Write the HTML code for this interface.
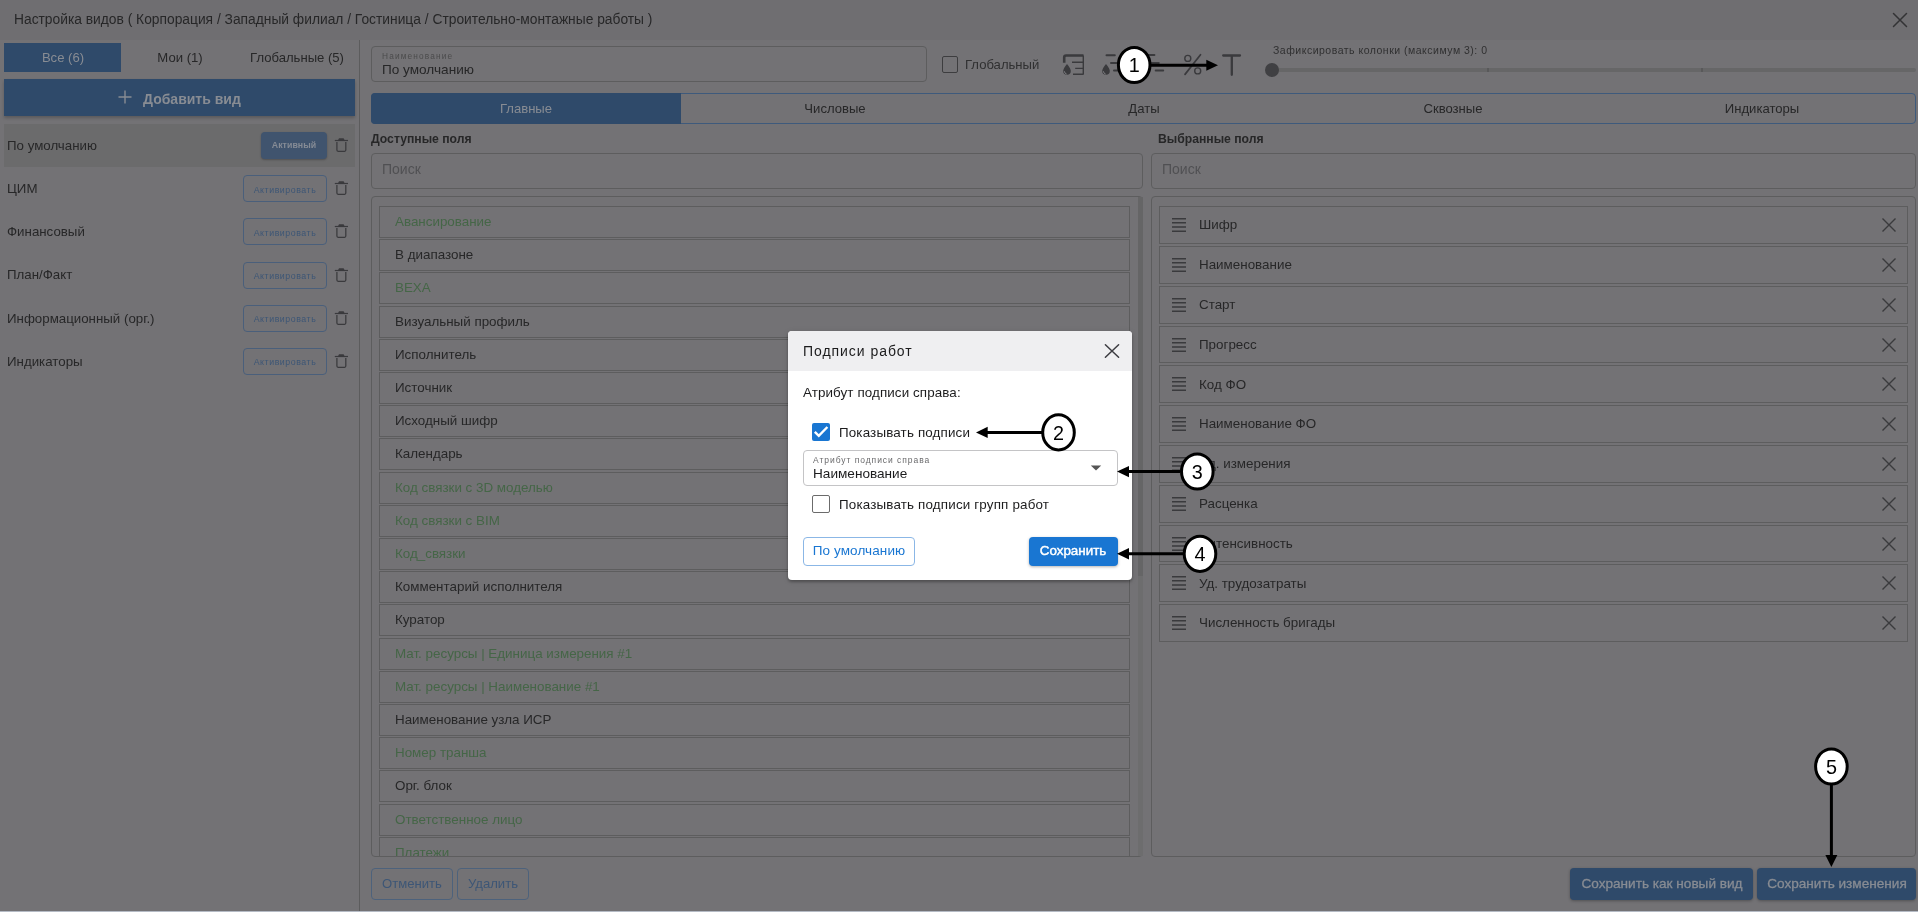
<!DOCTYPE html>
<html><head><meta charset="utf-8">
<style>
*{box-sizing:border-box;margin:0;padding:0}
html,body{width:1918px;height:912px;overflow:hidden}
body{position:relative;background:#737275;font-family:"Liberation Sans",sans-serif;color:#272728;font-size:13px}
.a{position:absolute}
.t{position:absolute;white-space:nowrap;line-height:1;will-change:transform}
</style></head><body>
<div class="a" style="left:0px;top:0px;width:1918px;height:40px;background:#6f6e71"></div>
<div class="t" style="left:14px;top:12.52px;font-size:13.8px;color:#272728;">Настройка видов ( Корпорация / Западный филиал / Гостиница / Строительно-монтажные работы )</div>
<svg class="a" style="left:1892px;top:12px" width="16" height="16" viewBox="0 0 16 16"><path d="M1.5 1.5L14.5 14.5M14.5 1.5L1.5 14.5" stroke="#333335" stroke-width="1.5" stroke-linecap="round"/></svg>
<div class="a" style="left:359px;top:40px;width:1px;height:871px;background:#5c5c5d"></div>
<div class="a" style="left:4px;top:43px;width:117px;height:29px;background:#2f4a6a"></div>
<div class="t" style="left:-237.5px;width:600px;text-align:center;top:50.91px;font-size:13.1px;color:#888c93;">Все (6)</div>
<div class="t" style="left:-120.5px;width:600px;text-align:center;top:50.91px;font-size:13.1px;color:#272728;">Мои (1)</div>
<div class="t" style="left:-3.5px;width:600px;text-align:center;top:50.91px;font-size:13.1px;color:#272728;">Глобальные (5)</div>
<div class="a" style="left:4px;top:79px;width:351px;height:37px;background:#2f4a6a;box-shadow:0 2px 3px rgba(0,0,0,.22)"></div>
<svg class="a" style="left:118px;top:90px" width="14" height="14"><path d="M7 0.5V13.5M0.5 7H13.5" stroke="#888c93" stroke-width="1.4"/></svg>
<div class="t" style="left:142.5px;top:91.75px;font-size:14px;color:#888c93;font-weight:700;letter-spacing:0px;">Добавить вид</div>
<div class="a" style="left:4px;top:124px;width:351px;height:43px;background:#6b6b6c"></div>
<div class="a" style="left:261px;top:132px;width:66px;height:27px;background:#40546e;border-radius:4px;box-shadow:0 1px 2px rgba(0,0,0,.25)"></div>
<div class="t" style="left:-6px;width:600px;text-align:center;top:140.95px;font-size:8.8px;color:#858b95;font-weight:700;letter-spacing:0.05px;">Активный</div>
<div class="t" style="left:7px;top:139.04px;font-size:13.3px;color:#272728;">По умолчанию</div>
<svg class="a" style="left:334px;top:137.0px" width="15" height="16" viewBox="0 0 15 16"><path d="M0.8 3.5H14" stroke="#3a3a3d" stroke-width="1.2"/><path d="M4 3.2L5 1.2H9.6L10.6 3.2Z" fill="#3a3a3d"/><path d="M2.9 5V13.1Q2.9 14.3 4.1 14.3H10.6Q11.8 14.3 11.8 13.1V5" stroke="#3a3a3d" stroke-width="1.25" fill="none"/></svg>
<div class="a" style="left:243px;top:175.2px;width:84px;height:27px;border:1px solid #4a5f7b;border-radius:4px"></div>
<div class="t" style="left:-15px;width:600px;text-align:center;top:185.60px;font-size:8.8px;color:#3d5676;letter-spacing:0.55px;">Активировать</div>
<div class="t" style="left:7px;top:182.19px;font-size:13.3px;color:#272728;">ЦИМ</div>
<svg class="a" style="left:334px;top:180.2px" width="15" height="16" viewBox="0 0 15 16"><path d="M0.8 3.5H14" stroke="#3a3a3d" stroke-width="1.2"/><path d="M4 3.2L5 1.2H9.6L10.6 3.2Z" fill="#3a3a3d"/><path d="M2.9 5V13.1Q2.9 14.3 4.1 14.3H10.6Q11.8 14.3 11.8 13.1V5" stroke="#3a3a3d" stroke-width="1.25" fill="none"/></svg>
<div class="a" style="left:243px;top:218.4px;width:84px;height:27px;border:1px solid #4a5f7b;border-radius:4px"></div>
<div class="t" style="left:-15px;width:600px;text-align:center;top:228.75px;font-size:8.8px;color:#3d5676;letter-spacing:0.55px;">Активировать</div>
<div class="t" style="left:7px;top:225.34px;font-size:13.3px;color:#272728;">Финансовый</div>
<svg class="a" style="left:334px;top:223.3px" width="15" height="16" viewBox="0 0 15 16"><path d="M0.8 3.5H14" stroke="#3a3a3d" stroke-width="1.2"/><path d="M4 3.2L5 1.2H9.6L10.6 3.2Z" fill="#3a3a3d"/><path d="M2.9 5V13.1Q2.9 14.3 4.1 14.3H10.6Q11.8 14.3 11.8 13.1V5" stroke="#3a3a3d" stroke-width="1.25" fill="none"/></svg>
<div class="a" style="left:243px;top:261.6px;width:84px;height:27px;border:1px solid #4a5f7b;border-radius:4px"></div>
<div class="t" style="left:-15px;width:600px;text-align:center;top:271.90px;font-size:8.8px;color:#3d5676;letter-spacing:0.55px;">Активировать</div>
<div class="t" style="left:7px;top:268.49px;font-size:13.3px;color:#272728;">План/Факт</div>
<svg class="a" style="left:334px;top:266.5px" width="15" height="16" viewBox="0 0 15 16"><path d="M0.8 3.5H14" stroke="#3a3a3d" stroke-width="1.2"/><path d="M4 3.2L5 1.2H9.6L10.6 3.2Z" fill="#3a3a3d"/><path d="M2.9 5V13.1Q2.9 14.3 4.1 14.3H10.6Q11.8 14.3 11.8 13.1V5" stroke="#3a3a3d" stroke-width="1.25" fill="none"/></svg>
<div class="a" style="left:243px;top:304.7px;width:84px;height:27px;border:1px solid #4a5f7b;border-radius:4px"></div>
<div class="t" style="left:-15px;width:600px;text-align:center;top:315.05px;font-size:8.8px;color:#3d5676;letter-spacing:0.55px;">Активировать</div>
<div class="t" style="left:7px;top:311.64px;font-size:13.3px;color:#272728;">Информационный (орг.)</div>
<svg class="a" style="left:334px;top:309.6px" width="15" height="16" viewBox="0 0 15 16"><path d="M0.8 3.5H14" stroke="#3a3a3d" stroke-width="1.2"/><path d="M4 3.2L5 1.2H9.6L10.6 3.2Z" fill="#3a3a3d"/><path d="M2.9 5V13.1Q2.9 14.3 4.1 14.3H10.6Q11.8 14.3 11.8 13.1V5" stroke="#3a3a3d" stroke-width="1.25" fill="none"/></svg>
<div class="a" style="left:243px;top:347.8px;width:84px;height:27px;border:1px solid #4a5f7b;border-radius:4px"></div>
<div class="t" style="left:-15px;width:600px;text-align:center;top:358.20px;font-size:8.8px;color:#3d5676;letter-spacing:0.55px;">Активировать</div>
<div class="t" style="left:7px;top:354.79px;font-size:13.3px;color:#272728;">Индикаторы</div>
<svg class="a" style="left:334px;top:352.8px" width="15" height="16" viewBox="0 0 15 16"><path d="M0.8 3.5H14" stroke="#3a3a3d" stroke-width="1.2"/><path d="M4 3.2L5 1.2H9.6L10.6 3.2Z" fill="#3a3a3d"/><path d="M2.9 5V13.1Q2.9 14.3 4.1 14.3H10.6Q11.8 14.3 11.8 13.1V5" stroke="#3a3a3d" stroke-width="1.25" fill="none"/></svg>
<div class="a" style="left:371px;top:46px;width:556px;height:36px;border:1px solid #5d5d5e;border-radius:4px"></div>
<div class="t" style="left:382px;top:52.17px;font-size:8.3px;color:#4b4b4c;letter-spacing:1.15px;">Наименование</div>
<div class="t" style="left:382px;top:63.49px;font-size:13.6px;color:#272728;">По умолчанию</div>
<div class="a" style="left:942px;top:56.3px;width:16px;height:16.4px;border:1.3px solid #3d3d3f;border-radius:2px"></div>
<div class="t" style="left:964.6px;top:57.71px;font-size:13.1px;color:#303031;">Глобальный</div>
<svg class="a" style="left:1060px;top:50px" width="190" height="30" viewBox="1060 50 190 30">
<g fill="none" stroke="#3a3a3d">
<path d="M1064.2 62.7V57.4Q1064.2 55.5 1066.1 55.5H1083.5" stroke-width="2.6" />
<path d="M1083.3 55.4V74.3" stroke-width="1.4"/>
<path d="M1072 62.3H1083.6M1075.2 68.4H1083.6M1073 74.3H1083.6" stroke-width="1.4"/>
<path d="M1106.5 55.3H1114.8M1111 62.9H1123M1114 70.4H1123" stroke-width="2" stroke-linecap="round"/>
<path d="M1142 55H1154.4M1147 62.9H1158.8M1155.7 70.5H1163.2" stroke-width="2" stroke-linecap="round"/>
<circle cx="1187.8" cy="58.4" r="3" stroke-width="1.4"/>
<circle cx="1197.7" cy="70.9" r="3" stroke-width="1.4"/>
<path d="M1185 74.4L1200.5 54.7" stroke-width="1.7" stroke-linecap="round"/>
<path d="M1223.2 55.5H1240M1231.8 55.5V74.8" stroke-width="2.3" stroke-linecap="round"/>
</g>
<path d="M1067 64Q1063.2 68.6 1063.2 71Q1063.2 74.8 1067 74.8Q1070.8 74.8 1070.8 71Q1070.8 68.6 1067 64Z" fill="#3a3a3d"/>
<path d="M1106 64Q1102.2 68.6 1102.2 71Q1102.2 74.8 1106 74.8Q1109.8 74.8 1109.8 71Q1109.8 68.6 1106 64Z" fill="#3a3a3d"/>
<path d="M1064.3 71.2Q1064.5 73.5 1066.7 74.1M1103.3 71.2Q1103.5 73.5 1105.7 74.1" stroke="#8c8c90" stroke-width="0.8" fill="none"/>
</svg>
<div class="t" style="left:1272.7px;top:45.11px;font-size:10.5px;color:#303031;letter-spacing:0.5px;">Зафиксировать колонки (максимум 3): 0</div>
<div class="a" style="left:1272px;top:68px;width:644px;height:4px;background:#666667;border-radius:2px"></div>
<div class="a" style="left:1486.5px;top:68px;width:2px;height:4px;background:#59595a"></div>
<div class="a" style="left:1701px;top:68px;width:2px;height:4px;background:#59595a"></div>
<div class="a" style="left:1265px;top:63px;width:14px;height:14px;border-radius:50%;background:#404043"></div>
<div class="a" style="left:371px;top:93px;width:1545px;height:31px;border:1px solid #3e5a7c;border-radius:4px;overflow:hidden"></div>
<div class="a" style="left:371px;top:93px;width:310px;height:31px;background:#2f4a6a;border-radius:4px 0 0 4px"></div>
<div class="t" style="left:225.5px;width:600px;text-align:center;top:101.81px;font-size:13.1px;color:#888c93;">Главные</div>
<div class="t" style="left:534.5px;width:600px;text-align:center;top:101.81px;font-size:13.1px;color:#272728;">Числовые</div>
<div class="t" style="left:843.5px;width:600px;text-align:center;top:101.81px;font-size:13.1px;color:#272728;">Даты</div>
<div class="t" style="left:1152.5px;width:600px;text-align:center;top:101.81px;font-size:13.1px;color:#272728;">Сквозные</div>
<div class="t" style="left:1461.5px;width:600px;text-align:center;top:101.81px;font-size:13.1px;color:#272728;">Индикаторы</div>
<div class="t" style="left:371px;top:133.27px;font-size:12.2px;color:#272728;font-weight:700;">Доступные поля</div>
<div class="t" style="left:1158.4px;top:133.27px;font-size:12.2px;color:#272728;font-weight:700;">Выбранные поля</div>
<div class="a" style="left:371px;top:153px;width:772px;height:35.5px;border:1px solid #5d5d5e;border-radius:4px"></div>
<div class="t" style="left:382px;top:162.45px;font-size:14px;color:#505053;">Поиск</div>
<div class="a" style="left:1151px;top:153px;width:765px;height:35.5px;border:1px solid #5d5d5e;border-radius:4px"></div>
<div class="t" style="left:1162px;top:162.45px;font-size:14px;color:#505053;">Поиск</div>
<div class="a" style="left:371px;top:196px;width:772px;height:661px;border:1px solid #5d5d5e;border-radius:4px"></div>
<div class="a" style="left:1138px;top:197px;width:5px;height:659px;background:#6d6d6e"></div>
<div class="a" style="left:1138px;top:197px;width:5px;height:379px;background:#656566"></div>
<div class="a" style="left:372px;top:197px;width:766px;height:659px;overflow:hidden">
<div class="a" style="left:7px;top:9.0px;width:751px;height:32px;border:1px solid #5d5d5e"></div>
<div class="t" style="left:22.5px;top:18.06px;font-size:13.4px;color:#456647">Авансирование</div>
<div class="a" style="left:7px;top:42.2px;width:751px;height:32px;border:1px solid #5d5d5e"></div>
<div class="t" style="left:22.5px;top:51.26px;font-size:13.4px;color:#272728">В диапазоне</div>
<div class="a" style="left:7px;top:75.4px;width:751px;height:32px;border:1px solid #5d5d5e"></div>
<div class="t" style="left:22.5px;top:84.46px;font-size:13.4px;color:#456647">ВЕХА</div>
<div class="a" style="left:7px;top:108.6px;width:751px;height:32px;border:1px solid #5d5d5e"></div>
<div class="t" style="left:22.5px;top:117.66px;font-size:13.4px;color:#272728">Визуальный профиль</div>
<div class="a" style="left:7px;top:141.8px;width:751px;height:32px;border:1px solid #5d5d5e"></div>
<div class="t" style="left:22.5px;top:150.86px;font-size:13.4px;color:#272728">Исполнитель</div>
<div class="a" style="left:7px;top:175.0px;width:751px;height:32px;border:1px solid #5d5d5e"></div>
<div class="t" style="left:22.5px;top:184.06px;font-size:13.4px;color:#272728">Источник</div>
<div class="a" style="left:7px;top:208.2px;width:751px;height:32px;border:1px solid #5d5d5e"></div>
<div class="t" style="left:22.5px;top:217.26px;font-size:13.4px;color:#272728">Исходный шифр</div>
<div class="a" style="left:7px;top:241.4px;width:751px;height:32px;border:1px solid #5d5d5e"></div>
<div class="t" style="left:22.5px;top:250.46px;font-size:13.4px;color:#272728">Календарь</div>
<div class="a" style="left:7px;top:274.6px;width:751px;height:32px;border:1px solid #5d5d5e"></div>
<div class="t" style="left:22.5px;top:283.66px;font-size:13.4px;color:#456647">Код связки с 3D моделью</div>
<div class="a" style="left:7px;top:307.8px;width:751px;height:32px;border:1px solid #5d5d5e"></div>
<div class="t" style="left:22.5px;top:316.86px;font-size:13.4px;color:#456647">Код связки с BIM</div>
<div class="a" style="left:7px;top:341.0px;width:751px;height:32px;border:1px solid #5d5d5e"></div>
<div class="t" style="left:22.5px;top:350.06px;font-size:13.4px;color:#456647">Код_связки</div>
<div class="a" style="left:7px;top:374.2px;width:751px;height:32px;border:1px solid #5d5d5e"></div>
<div class="t" style="left:22.5px;top:383.26px;font-size:13.4px;color:#272728">Комментарий исполнителя</div>
<div class="a" style="left:7px;top:407.4px;width:751px;height:32px;border:1px solid #5d5d5e"></div>
<div class="t" style="left:22.5px;top:416.46px;font-size:13.4px;color:#272728">Куратор</div>
<div class="a" style="left:7px;top:440.6px;width:751px;height:32px;border:1px solid #5d5d5e"></div>
<div class="t" style="left:22.5px;top:449.66px;font-size:13.4px;color:#456647">Мат. ресурсы | Единица измерения #1</div>
<div class="a" style="left:7px;top:473.8px;width:751px;height:32px;border:1px solid #5d5d5e"></div>
<div class="t" style="left:22.5px;top:482.86px;font-size:13.4px;color:#456647">Мат. ресурсы | Наименование #1</div>
<div class="a" style="left:7px;top:507.0px;width:751px;height:32px;border:1px solid #5d5d5e"></div>
<div class="t" style="left:22.5px;top:516.06px;font-size:13.4px;color:#272728">Наименование узла ИСР</div>
<div class="a" style="left:7px;top:540.2px;width:751px;height:32px;border:1px solid #5d5d5e"></div>
<div class="t" style="left:22.5px;top:549.26px;font-size:13.4px;color:#456647">Номер транша</div>
<div class="a" style="left:7px;top:573.4px;width:751px;height:32px;border:1px solid #5d5d5e"></div>
<div class="t" style="left:22.5px;top:582.46px;font-size:13.4px;color:#272728">Орг. блок</div>
<div class="a" style="left:7px;top:606.6px;width:751px;height:32px;border:1px solid #5d5d5e"></div>
<div class="t" style="left:22.5px;top:615.66px;font-size:13.4px;color:#456647">Ответственное лицо</div>
<div class="a" style="left:7px;top:639.8px;width:751px;height:32px;border:1px solid #5d5d5e"></div>
<div class="t" style="left:22.5px;top:648.86px;font-size:13.4px;color:#456647">Платежи</div>
</div>
<div class="a" style="left:1151px;top:196px;width:765px;height:661px;border:1px solid #5d5d5e;border-radius:4px"></div>
<div class="a" style="left:1159px;top:206.2px;width:749px;height:37.8px;border:1px solid #5d5d5e"></div>
<div class="t" style="left:1199px;top:218.46px;font-size:13.4px;color:#272728;">Шифр</div>
<svg class="a" style="left:1172px;top:218.2px" width="14" height="14" viewBox="0 0 14 14"><path d="M0 0.7H14M0 4.85H14M0 9H14M0 13.15H14" stroke="#3a3a3d" stroke-width="1.5"/></svg>
<svg class="a" style="left:1882px;top:218.2px" width="14" height="14" viewBox="0 0 14 14"><path d="M0.5 0.5L13.5 13.5M13.5 0.5L0.5 13.5" stroke="#3a3a3d" stroke-width="1.4"/></svg>
<div class="a" style="left:1159px;top:246.0px;width:749px;height:37.8px;border:1px solid #5d5d5e"></div>
<div class="t" style="left:1199px;top:258.26px;font-size:13.4px;color:#272728;">Наименование</div>
<svg class="a" style="left:1172px;top:258.0px" width="14" height="14" viewBox="0 0 14 14"><path d="M0 0.7H14M0 4.85H14M0 9H14M0 13.15H14" stroke="#3a3a3d" stroke-width="1.5"/></svg>
<svg class="a" style="left:1882px;top:258.0px" width="14" height="14" viewBox="0 0 14 14"><path d="M0.5 0.5L13.5 13.5M13.5 0.5L0.5 13.5" stroke="#3a3a3d" stroke-width="1.4"/></svg>
<div class="a" style="left:1159px;top:285.8px;width:749px;height:37.8px;border:1px solid #5d5d5e"></div>
<div class="t" style="left:1199px;top:298.06px;font-size:13.4px;color:#272728;">Старт</div>
<svg class="a" style="left:1172px;top:297.8px" width="14" height="14" viewBox="0 0 14 14"><path d="M0 0.7H14M0 4.85H14M0 9H14M0 13.15H14" stroke="#3a3a3d" stroke-width="1.5"/></svg>
<svg class="a" style="left:1882px;top:297.8px" width="14" height="14" viewBox="0 0 14 14"><path d="M0.5 0.5L13.5 13.5M13.5 0.5L0.5 13.5" stroke="#3a3a3d" stroke-width="1.4"/></svg>
<div class="a" style="left:1159px;top:325.6px;width:749px;height:37.8px;border:1px solid #5d5d5e"></div>
<div class="t" style="left:1199px;top:337.86px;font-size:13.4px;color:#272728;">Прогресс</div>
<svg class="a" style="left:1172px;top:337.6px" width="14" height="14" viewBox="0 0 14 14"><path d="M0 0.7H14M0 4.85H14M0 9H14M0 13.15H14" stroke="#3a3a3d" stroke-width="1.5"/></svg>
<svg class="a" style="left:1882px;top:337.6px" width="14" height="14" viewBox="0 0 14 14"><path d="M0.5 0.5L13.5 13.5M13.5 0.5L0.5 13.5" stroke="#3a3a3d" stroke-width="1.4"/></svg>
<div class="a" style="left:1159px;top:365.4px;width:749px;height:37.8px;border:1px solid #5d5d5e"></div>
<div class="t" style="left:1199px;top:377.66px;font-size:13.4px;color:#272728;">Код ФО</div>
<svg class="a" style="left:1172px;top:377.4px" width="14" height="14" viewBox="0 0 14 14"><path d="M0 0.7H14M0 4.85H14M0 9H14M0 13.15H14" stroke="#3a3a3d" stroke-width="1.5"/></svg>
<svg class="a" style="left:1882px;top:377.4px" width="14" height="14" viewBox="0 0 14 14"><path d="M0.5 0.5L13.5 13.5M13.5 0.5L0.5 13.5" stroke="#3a3a3d" stroke-width="1.4"/></svg>
<div class="a" style="left:1159px;top:405.2px;width:749px;height:37.8px;border:1px solid #5d5d5e"></div>
<div class="t" style="left:1199px;top:417.46px;font-size:13.4px;color:#272728;">Наименование ФО</div>
<svg class="a" style="left:1172px;top:417.2px" width="14" height="14" viewBox="0 0 14 14"><path d="M0 0.7H14M0 4.85H14M0 9H14M0 13.15H14" stroke="#3a3a3d" stroke-width="1.5"/></svg>
<svg class="a" style="left:1882px;top:417.2px" width="14" height="14" viewBox="0 0 14 14"><path d="M0.5 0.5L13.5 13.5M13.5 0.5L0.5 13.5" stroke="#3a3a3d" stroke-width="1.4"/></svg>
<div class="a" style="left:1159px;top:445.0px;width:749px;height:37.8px;border:1px solid #5d5d5e"></div>
<div class="t" style="left:1199px;top:457.26px;font-size:13.4px;color:#272728;">Ед. измерения</div>
<svg class="a" style="left:1172px;top:457.0px" width="14" height="14" viewBox="0 0 14 14"><path d="M0 0.7H14M0 4.85H14M0 9H14M0 13.15H14" stroke="#3a3a3d" stroke-width="1.5"/></svg>
<svg class="a" style="left:1882px;top:457.0px" width="14" height="14" viewBox="0 0 14 14"><path d="M0.5 0.5L13.5 13.5M13.5 0.5L0.5 13.5" stroke="#3a3a3d" stroke-width="1.4"/></svg>
<div class="a" style="left:1159px;top:484.8px;width:749px;height:37.8px;border:1px solid #5d5d5e"></div>
<div class="t" style="left:1199px;top:497.06px;font-size:13.4px;color:#272728;">Расценка</div>
<svg class="a" style="left:1172px;top:496.8px" width="14" height="14" viewBox="0 0 14 14"><path d="M0 0.7H14M0 4.85H14M0 9H14M0 13.15H14" stroke="#3a3a3d" stroke-width="1.5"/></svg>
<svg class="a" style="left:1882px;top:496.8px" width="14" height="14" viewBox="0 0 14 14"><path d="M0.5 0.5L13.5 13.5M13.5 0.5L0.5 13.5" stroke="#3a3a3d" stroke-width="1.4"/></svg>
<div class="a" style="left:1159px;top:524.6px;width:749px;height:37.8px;border:1px solid #5d5d5e"></div>
<div class="t" style="left:1199px;top:536.86px;font-size:13.4px;color:#272728;">Интенсивность</div>
<svg class="a" style="left:1172px;top:536.6px" width="14" height="14" viewBox="0 0 14 14"><path d="M0 0.7H14M0 4.85H14M0 9H14M0 13.15H14" stroke="#3a3a3d" stroke-width="1.5"/></svg>
<svg class="a" style="left:1882px;top:536.6px" width="14" height="14" viewBox="0 0 14 14"><path d="M0.5 0.5L13.5 13.5M13.5 0.5L0.5 13.5" stroke="#3a3a3d" stroke-width="1.4"/></svg>
<div class="a" style="left:1159px;top:564.4px;width:749px;height:37.8px;border:1px solid #5d5d5e"></div>
<div class="t" style="left:1199px;top:576.66px;font-size:13.4px;color:#272728;">Уд. трудозатраты</div>
<svg class="a" style="left:1172px;top:576.4px" width="14" height="14" viewBox="0 0 14 14"><path d="M0 0.7H14M0 4.85H14M0 9H14M0 13.15H14" stroke="#3a3a3d" stroke-width="1.5"/></svg>
<svg class="a" style="left:1882px;top:576.4px" width="14" height="14" viewBox="0 0 14 14"><path d="M0.5 0.5L13.5 13.5M13.5 0.5L0.5 13.5" stroke="#3a3a3d" stroke-width="1.4"/></svg>
<div class="a" style="left:1159px;top:604.2px;width:749px;height:37.8px;border:1px solid #5d5d5e"></div>
<div class="t" style="left:1199px;top:616.46px;font-size:13.4px;color:#272728;">Численность бригады</div>
<svg class="a" style="left:1172px;top:616.2px" width="14" height="14" viewBox="0 0 14 14"><path d="M0 0.7H14M0 4.85H14M0 9H14M0 13.15H14" stroke="#3a3a3d" stroke-width="1.5"/></svg>
<svg class="a" style="left:1882px;top:616.2px" width="14" height="14" viewBox="0 0 14 14"><path d="M0.5 0.5L13.5 13.5M13.5 0.5L0.5 13.5" stroke="#3a3a3d" stroke-width="1.4"/></svg>
<div class="a" style="left:371px;top:868px;width:82px;height:32px;border:1px solid #4d627c;border-radius:4px"></div>
<div class="t" style="left:112px;width:600px;text-align:center;top:877.11px;font-size:13.1px;color:#3d5676;">Отменить</div>
<div class="a" style="left:457px;top:868px;width:72px;height:32px;border:1px solid #4d627c;border-radius:4px"></div>
<div class="t" style="left:193px;width:600px;text-align:center;top:877.11px;font-size:13.1px;color:#3d5676;">Удалить</div>
<div class="a" style="left:1570px;top:868px;width:183px;height:32px;background:#2f4a6a;border-radius:4px;box-shadow:0 1px 3px rgba(0,0,0,.3)"></div>
<div class="t" style="left:1361.5px;width:600px;text-align:center;top:876.69px;font-size:13.6px;color:#888c93;-webkit-text-stroke:0.3px #888c93;">Сохранить как новый вид</div>
<div class="a" style="left:1757px;top:868px;width:159px;height:32px;background:#2f4a6a;border-radius:4px;box-shadow:0 1px 3px rgba(0,0,0,.3)"></div>
<div class="t" style="left:1536.5px;width:600px;text-align:center;top:876.69px;font-size:13.6px;color:#888c93;-webkit-text-stroke:0.3px #888c93;">Сохранить изменения</div>
<div class="a" style="left:0px;top:911px;width:1918px;height:1px;background:#b5bbc5"></div>
<div class="a" style="left:788px;top:331px;width:344px;height:249px;background:#fff;border-radius:4px;box-shadow:0 2px 3px rgba(0,0,0,.28),0 1px 6px rgba(0,0,0,.1);overflow:hidden"></div>
<div class="a" style="left:788px;top:331px;width:344px;height:40px;background:#efeff1;border-radius:4px 4px 0 0"></div>
<div class="t" style="left:803px;top:344.35px;font-size:14px;color:#1c1c1d;letter-spacing:0.95px;">Подписи работ</div>
<svg class="a" style="left:1104px;top:343px" width="17" height="17" viewBox="0 0 17 17"><path d="M1.4 1.7L14.6 14.2M14.6 1.7L1.4 14.2" stroke="#3c3c41" stroke-width="1.5" stroke-linecap="round"/></svg>
<div class="t" style="left:803px;top:385.96px;font-size:13.4px;color:#1c1c1d;letter-spacing:0.1px;">Атрибут подписи справа:</div>
<div class="a" style="left:812px;top:423px;width:18px;height:18px;background:#1976d2;border-radius:2px"></div>
<svg class="a" style="left:812px;top:423px" width="18" height="18" viewBox="0 0 18 18"><path d="M2.8 8.8L6.8 12.8L15.4 4.0" stroke="#fff" stroke-width="2.4" fill="none"/></svg>
<div class="t" style="left:839px;top:425.96px;font-size:13.4px;color:#1c1c1d;letter-spacing:0.15px;">Показывать подписи</div>
<div class="a" style="left:803px;top:450px;width:315px;height:35.5px;border:1px solid #c4c4c6;border-radius:4px"></div>
<div class="t" style="left:813px;top:456.00px;font-size:8.5px;color:#6a6a6c;letter-spacing:0.95px;">Атрибут подписи справа</div>
<div class="t" style="left:813px;top:467.09px;font-size:13.6px;color:#1c1c1d;letter-spacing:0px;">Наименование</div>
<svg class="a" style="left:1090px;top:465px" width="12" height="6" viewBox="0 0 12 6"><path d="M0.8 0.5H11.2L6 5.6Z" fill="#555"/></svg>
<div class="a" style="left:812px;top:495px;width:18px;height:18px;border:1.6px solid #6b6b6b;border-radius:2px"></div>
<div class="t" style="left:839px;top:497.66px;font-size:13.4px;color:#1c1c1d;letter-spacing:0.17px;">Показывать подписи групп работ</div>
<div class="a" style="left:803px;top:537px;width:112px;height:29px;border:1px solid #8bb7e6;border-radius:4px"></div>
<div class="t" style="left:559px;width:600px;text-align:center;top:544.27px;font-size:13.5px;color:#1976d2;letter-spacing:0.1px;">По умолчанию</div>
<div class="a" style="left:1029px;top:537px;width:88.5px;height:29px;background:#1976d2;border-radius:4px;box-shadow:0 1px 3px rgba(0,0,0,.3)"></div>
<div class="t" style="left:773.2px;width:600px;text-align:center;top:544.36px;font-size:13.4px;color:#fff;-webkit-text-stroke:0.45px #fff;">Сохранить</div>
<svg class="a" style="left:0;top:0" width="1918" height="912" viewBox="0 0 1918 912">
<g stroke="#000" stroke-width="3" fill="none">
<path d="M1150 65.2H1208"/>
<path d="M1042 432.4H986"/>
<path d="M1180 471.6H1127"/>
<path d="M1183 553.7H1127"/>
<path d="M1831.4 785V857"/>
</g>
<g fill="#000">
<path d="M1218 65.2L1206.3 59.8V70.8Z"/>
<path d="M976 432.4L987.7 426.8V438Z"/>
<path d="M1117 471.6L1129 465.9V477.3Z"/>
<path d="M1117 553.7L1129 548V559.4Z"/>
<path d="M1831.4 867L1825.4 855H1837.4Z"/>
</g>
<ellipse cx="1134.2" cy="65" rx="15.8" ry="17.6" fill="#fff" stroke="#000" stroke-width="3"/>
<text x="1134.2" y="72.1" text-anchor="middle" font-family="Liberation Sans" font-size="19.8" fill="#000">1</text>
<ellipse cx="1058.5" cy="432.4" rx="15.8" ry="17.6" fill="#fff" stroke="#000" stroke-width="3"/>
<text x="1058.5" y="439.5" text-anchor="middle" font-family="Liberation Sans" font-size="19.8" fill="#000">2</text>
<ellipse cx="1197.3" cy="471.5" rx="15.8" ry="17.6" fill="#fff" stroke="#000" stroke-width="3"/>
<text x="1197.3" y="478.6" text-anchor="middle" font-family="Liberation Sans" font-size="19.8" fill="#000">3</text>
<ellipse cx="1200" cy="553.8" rx="15.8" ry="17.6" fill="#fff" stroke="#000" stroke-width="3"/>
<text x="1200" y="560.9" text-anchor="middle" font-family="Liberation Sans" font-size="19.8" fill="#000">4</text>
<ellipse cx="1831.4" cy="766.5" rx="15.8" ry="17.6" fill="#fff" stroke="#000" stroke-width="3"/>
<text x="1831.4" y="773.6" text-anchor="middle" font-family="Liberation Sans" font-size="19.8" fill="#000">5</text>
</svg>
</body></html>
